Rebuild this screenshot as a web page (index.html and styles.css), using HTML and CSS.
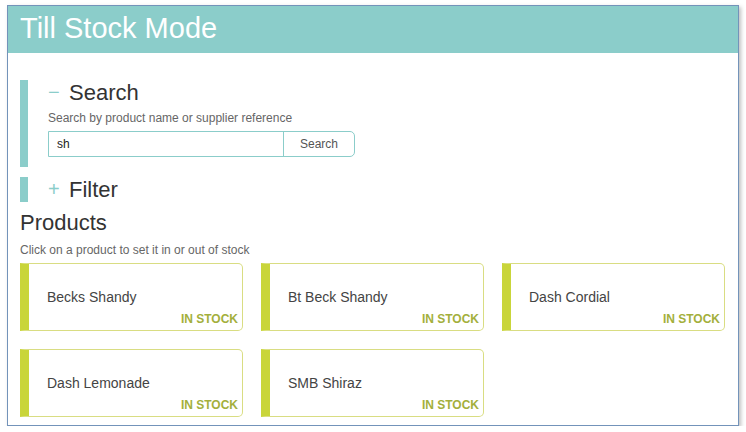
FILE: index.html
```html
<!DOCTYPE html>
<html>
<head>
<meta charset="utf-8">
<link rel="stylesheet" href="styles.css">
</head>
<body>
<div class="window">
  <header class="topbar"><h1 class="title">Till Stock Mode</h1></header>
  <main class="content">
    <section class="panel panel-search">
      <h2 class="panel-head"><span class="toggle">&minus;</span>Search</h2>
      <p class="hint">Search by product name or supplier reference</p>
      <div class="search-box">
        <div class="search-input">sh</div>
        <div class="search-btn">Search</div>
      </div>
    </section>
    <section class="panel panel-filter">
      <h2 class="panel-head"><span class="toggle">+</span>Filter</h2>
    </section>
    <h2 class="products-title">Products</h2>
    <p class="products-hint">Click on a product to set it in or out of stock</p>
    <div class="grid">
      <div class="card"><span class="name">Becks Shandy</span><span class="stock">IN STOCK</span></div>
      <div class="card"><span class="name">Bt Beck Shandy</span><span class="stock">IN STOCK</span></div>
      <div class="card"><span class="name">Dash Cordial</span><span class="stock">IN STOCK</span></div>
      <div class="card"><span class="name">Dash Lemonade</span><span class="stock">IN STOCK</span></div>
      <div class="card"><span class="name">SMB Shiraz</span><span class="stock">IN STOCK</span></div>
    </div>
  </main>
</div>
</body>
</html>
```
FILE: styles.css
```css
html, body {
  margin: 0;
  padding: 0;
  background: #ffffff;
  font-family: "Liberation Sans", Arial, sans-serif;
}
.window {
  margin: 5px 0 0 7px;
  width: 730px;
  height: 419px;
  border: 1px solid #7393ba;
  box-shadow: 2px 2px 4px rgba(0, 0, 0, 0.25);
  background: #fff;
  overflow: hidden;
}
.topbar {
  height: 47px;
  background: #8bcdca;
  padding-left: 12px;
  display: flex;
  align-items: center;
}
.title {
  margin: 0;
  font-size: 29px;
  font-weight: normal;
  color: #ffffff;
  line-height: 1;
  padding-bottom: 2px;
}
.content {
  padding: 0 12px;
}
.panel {
  border-left: 8px solid #8bcdca;
  padding-left: 20px;
  box-sizing: border-box;
}
.panel-search {
  margin-top: 27px;
  height: 87px;
}
.panel-filter {
  margin-top: 10px;
  height: 25px;
}
.panel-head {
  margin: 0;
  font-size: 22px;
  font-weight: normal;
  color: #333;
  line-height: 25px;
  display: flex;
  align-items: center;
}
.toggle {
  color: #8bcdca;
  width: 21px;
  font-size: 20px;
}
.hint {
  margin: 5px 0 0;
  font-size: 12px;
  color: #666;
  line-height: 16px;
}
.search-box {
  margin-top: 5px;
  width: 307px;
  height: 26px;
  box-sizing: border-box;
  border: 1px solid #8bcdca;
  border-radius: 0 5px 5px 0;
  display: flex;
  font-size: 12px;
}
.search-input {
  flex: 1;
  padding-left: 8px;
  display: flex;
  align-items: center;
  color: #222;
  border-right: 1px solid #8bcdca;
}
.search-btn {
  width: 70px;
  display: flex;
  align-items: center;
  justify-content: center;
  color: #555;
}
.products-title {
  margin: 8px 0 0;
  font-size: 22px;
  font-weight: normal;
  color: #333;
  line-height: 25px;
}
.products-hint {
  margin: 8px 0 0;
  font-size: 12px;
  color: #666;
  line-height: 14px;
}
.grid {
  margin-top: 6px;
  display: grid;
  grid-template-columns: repeat(3, 223px);
  column-gap: 18px;
  row-gap: 18px;
}
.card {
  height: 68px;
  box-sizing: border-box;
  border: 1px solid #d9dd82;
  border-left: 9px solid #c9d53a;
  border-radius: 0 5px 5px 0;
  position: relative;
  display: flex;
  align-items: center;
  padding-left: 18px;
}
.name {
  font-size: 14px;
  color: #444;
}
.stock {
  position: absolute;
  right: 4px;
  bottom: 4px;
  font-size: 12px;
  font-weight: bold;
  color: #a3af3c;
}
```
